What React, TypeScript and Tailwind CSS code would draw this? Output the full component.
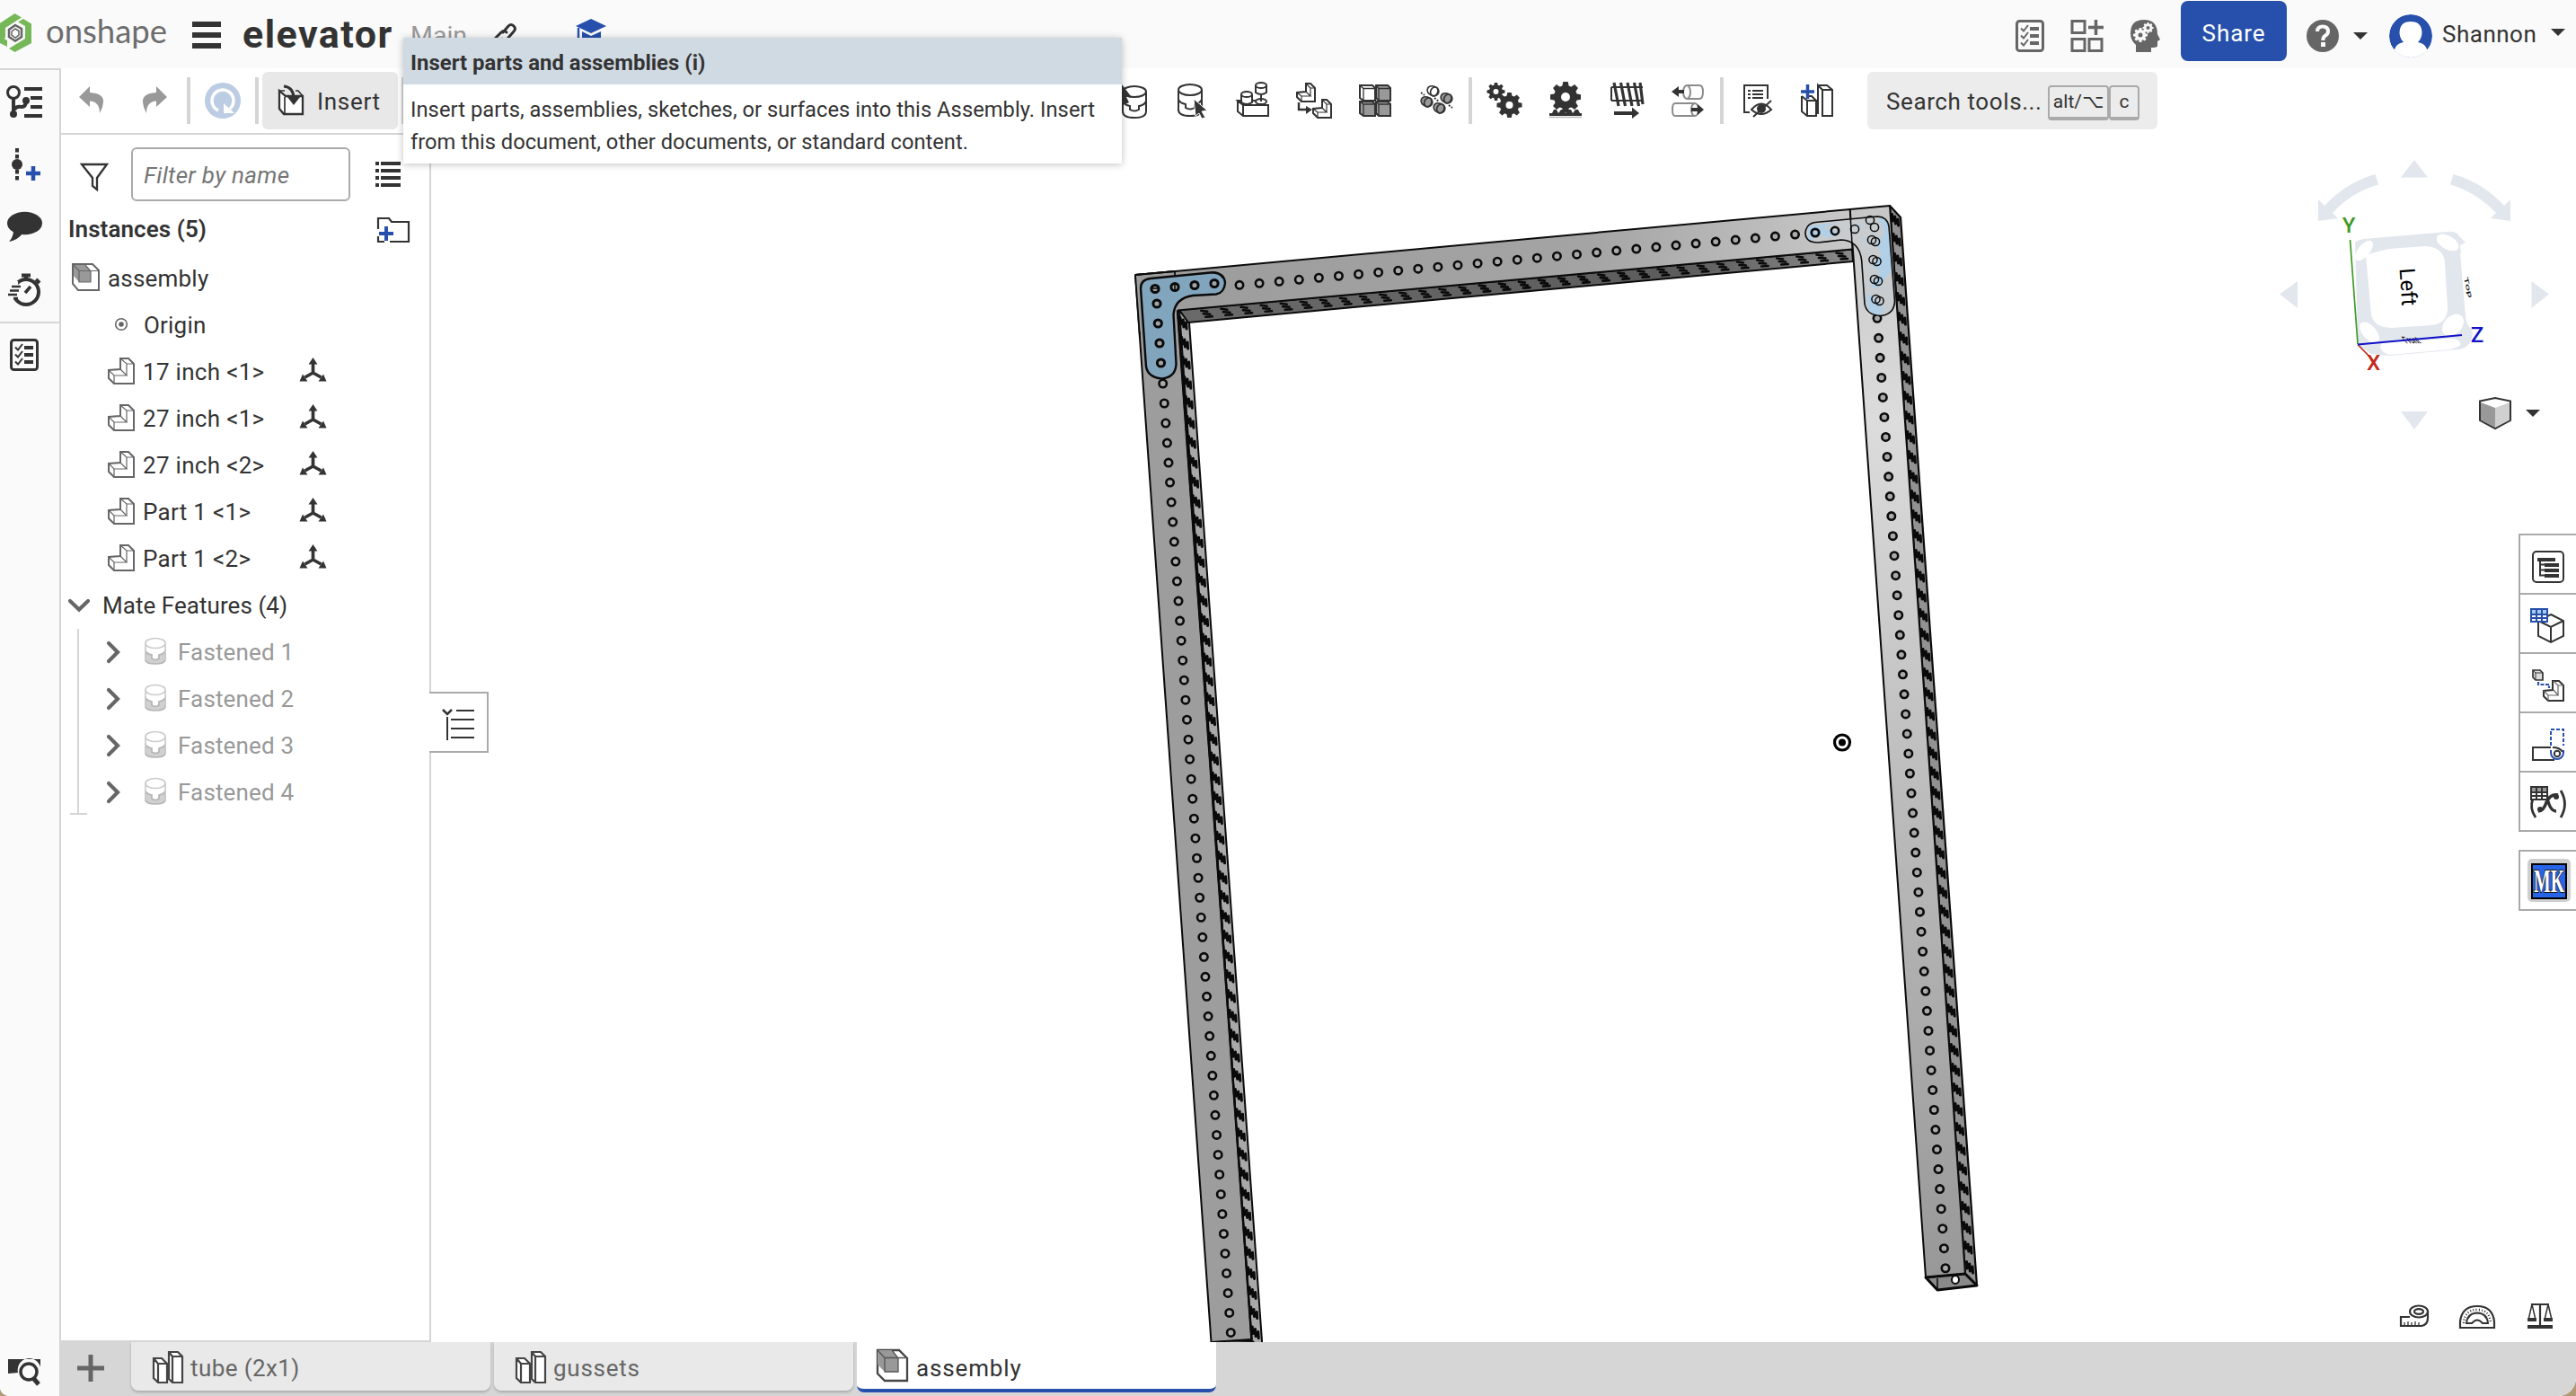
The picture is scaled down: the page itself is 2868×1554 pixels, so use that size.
import type { ReactNode } from "react";

const DARK = "#333333";
const GRAY = "#666666";
const BLUE = "#2650ab";

/* Drawing surface; the view box is given as "x y width height" in page units. */
function Art({ box, children, className = "" }: { box: string; children: ReactNode; className?: string }) {
  const [, , w, h] = box.split(" ");
  return (
    <svg viewBox={box} width={w} height={h} fill="none" className={`shrink-0 ${className}`}>
      {children}
    </svg>
  );
}

const range = (n: number) => Array.from({ length: n }, (_, i) => i);

/* ---------- header ---------- */

function Checklist({ x, y, color }: { x: number; y: number; color: string }) {
  return (
    <g transform={`translate(${x} ${y})`}>
      <rect x="1.5" y="1.5" width="29" height="33" rx="3" stroke={color} strokeWidth="3" />
      {[8, 16, 24].map((t) => (
        <g key={t}>
          <path d={`M6 ${t + 1.5} l3 3 l5 -6.5`} stroke={color} strokeWidth="2" />
          <rect x="16" y={t} width="10" height="4" fill={color} />
        </g>
      ))}
    </g>
  );
}

function Gear({ cx, cy, r, hole, teeth, color, holeColor = "#fff" }: { cx: number; cy: number; r: number; hole: number; teeth: number; color: string; holeColor?: string }) {
  return (
    <g transform={`translate(${cx} ${cy})`}>
      <circle r={r * 0.76} fill={color} />
      {range(teeth).map((i) => (
        <path key={i} transform={`rotate(${(i * 360) / teeth})`} d={`M${-r * 0.24} ${-r * 0.6} L${-r * 0.16} ${-r} H${r * 0.16} L${r * 0.24} ${-r * 0.6} Z`} fill={color} />
      ))}
      <circle r={hole} fill={holeColor} />
    </g>
  );
}

function Header() {
  return (
    <header className="flex h-[76px] shrink-0 items-center bg-[#fafafa] text-[26px] text-[#333]">
      <Art box="0 0 51 76">
        <path d="M16.500 15 L24 19.500 L6 31 V42 L-2 46 V27 Z" fill="#76b857" />
        <path d="M26 21 L35 26.500 V48 L16.500 58 L10 54 L28 43 V29 L20 24.500 Z" fill="#76b857" />
        <path d="M0 40 L8 45 V52 L0 48 Z" fill="#76b857" />
        <path d="M17 28 L24 32 V41 L17 45.500 L10 41 V33 Z" stroke={GRAY} strokeWidth="2.500" />
        <path d="M17 32 L21 34.500 V39 L17 42 L13 39 V35 Z" stroke={GRAY} strokeWidth="1.500" />
      </Art>
      <span className="w-[163px] pb-[8px] font-[Lato] text-[36.500px] leading-[40px] text-[#6d6d6d]">onshape</span>
      <Art box="214 0 56 76">
        <path d="M214 27 H246 M214 39 H246 M214 51 H246" stroke={DARK} strokeWidth="6" />
      </Art>
      <span className="w-[187px] text-[43px] font-bold tracking-[1.450px]">elevator</span>
      <span className="w-[91px] pt-[4px] text-[28.500px] text-[#999]">Main</span>
      <Art box="548 0 93 76">
        <g stroke={DARK} strokeWidth="3" strokeLinecap="round">
          <path d="M560 36 L566 29 q3 -3 6 0 q3 3 0 6 L565 43 q-3 3 -6 0" />
          <path d="M564 36 q-3 -3 -6 0 L551 43 q-3 3 0 6" />
        </g>
      </Art>
      <Art box="641 0 60 76">
        <path d="M641 29 L658 21 L675 29 L658 37 Z M648 35 L658 40 L669 35 V46 H648 Z" fill={BLUE} />
        <path d="M644 31 V46" stroke={BLUE} strokeWidth="2.500" />
      </Art>
      <div className="flex-1" />
      <Art box="2244 0 61 76">
        <Checklist x={2244} y={22} color={GRAY} />
      </Art>
      <Art box="2305 0 67 76">
        <g stroke={GRAY} strokeWidth="3">
          <rect x="2307" y="23.500" width="14" height="13" />
          <rect x="2307" y="43.500" width="14" height="13" />
          <rect x="2326" y="43.500" width="14" height="13" />
          <path d="M2325 30.500 H2342 M2333.500 22 V39" strokeWidth="3.500" />
        </g>
      </Art>
      <Art box="2372 0 56 76">
        <path d="M2387 22 Q2402 22 2402 38 L2405 44 L2402 46 V51 Q2402 53 2395 53 V58 H2378 V50 Q2372 45 2372 37 Q2372 22 2387 22 Z" fill={GRAY} />
        <Gear cx={2383} cy={39} r={8} hole={2.5} teeth={8} color="#fafafa" holeColor={GRAY} />
        <Gear cx={2391.5} cy={31} r={6} hole={2} teeth={8} color="#fafafa" holeColor={GRAY} />
      </Art>
      <button className="mb-[7px] flex h-[67px] w-[118px] items-center justify-center rounded-[8px] bg-[#2650ab] pt-[5px] tracking-[0.900px] text-white">Share</button>
      <Art box="2546 0 114 76">
        <circle cx="2586" cy="40" r="18" fill={GRAY} />
        <path d="M2580 35 Q2580 29.500 2586 29.500 Q2592 29.500 2592 35 Q2592 38 2588.500 40 Q2586.300 41.500 2586.300 45" stroke="#fafafa" strokeWidth="4" />
        <rect x="2584" y="47" width="5" height="5" fill="#fafafa" />
        <path d="M2620 36 H2636 L2628 44 Z" fill={DARK} />
      </Art>
      <Art box="2660 0 59 76">
        <clipPath id="avatar"><circle cx="2684" cy="40" r="24" /></clipPath>
        <g clipPath="url(#avatar)">
          <circle cx="2684" cy="40" r="24" fill={BLUE} />
          <path d="M2684 24 Q2696.500 24 2696.500 37 Q2696 43 2692 47 Q2704 49 2703 64 H2665 Q2664 49 2676 47 Q2672 43 2671.500 37 Q2671.500 24 2684 24 Z" fill="#fff" />
        </g>
      </Art>
      <span className="w-[121px] tracking-[0.500px]">Shannon</span>
      <Art box="2840 0 28 76">
        <path d="M2840 32 H2856 L2848 40 Z" fill={DARK} />
      </Art>
    </header>
  );
}

/* ---------- toolbar ---------- */

const Sep = () => <div className="h-[52px] w-[4px] shrink-0 bg-[#d5d5d5]" />;

function MateBody({ x, y }: { x: number; y: number }) {
  return (
    <g transform={`translate(${x} ${y})`} stroke={DARK} strokeWidth="2">
      <path d="M1 7 V29 Q1 36 14 36 Q27 36 27 29 V7" />
      <ellipse cx="14" cy="7" rx="13" ry="6" />
      <path d="M1 18 Q3 22 9 23 V27 Q14 30 19 27 V23 Q25 22 27 18" />
    </g>
  );
}

function Cyl({ x, y, fill }: { x: number; y: number; fill: string }) {
  return (
    <g transform={`translate(${x} ${y}) rotate(25)`} stroke={DARK} strokeWidth="1.700">
      <path d="M-6 0 a6 5 0 0 1 5 -5 h3 a5 5 0 0 1 0 10 h-3 a6 5 0 0 1 -5 -5 Z" fill={fill} />
      <ellipse cx="2" cy="0" rx="4" ry="5" fill={fill} />
    </g>
  );
}

function Toolbar() {
  return (
    <div className="flex h-[72px] shrink-0 items-center bg-white text-[26px] text-[#333]">
      <Art box="68 76 70 72">
        <path d="M88 108 L100 96 V103 Q116 104 115 114 Q114.500 120 111 126 Q111 113 100 112.500 V119 Z" fill="#999" />
      </Art>
      <Art box="138 76 70 72">
        <path d="M186 108 L174 96 V103 Q158 104 159 114 Q159.500 120 163 126 Q163 113 174 112.500 V119 Z" fill="#999" />
      </Art>
      <Sep />
      <Art box="212 76 72 72">
        <circle cx="248" cy="112" r="20" fill="#bccce3" />
        <path d="M243 123 A12 12 0 1 1 256 121" stroke="#fff" strokeWidth="3.500" />
        <path d="M249 115 L261 126 H249 Z" fill="#fff" />
      </Art>
      <Sep />
      <button className="mx-[4px] flex h-[64px] w-[151px] items-center rounded-[6px] bg-[#e8e8e8] tracking-[0.700px]">
        <Art box="292 80 61 64">
          <path d="M311 101 L318 107 H337 V127 H316 L311 121 Z" fill="#fff" stroke={DARK} strokeWidth="2.300" />
          <path d="M311 101 H317 M329 101 H332 L337 107 M317 108 V126" stroke={DARK} strokeWidth="1.700" />
          <path d="M316 96 Q327 97 327 110" stroke={DARK} strokeWidth="3" />
          <path d="M320 108 H334 L327 117 Z" fill={DARK} />
        </Art>
        <span className="pt-[2px]">Insert</span>
      </button>
      <Sep />
      <div className="w-[796px]" />
      <Art box="1247 76 53 72">
        <MateBody x={1249} y={95} />
        <path d="M1249 94 L1259 107 L1254 108 L1257 114 L1253 116 L1249 111 Z" fill={DARK} />
      </Art>
      <Art box="1300 76 60 72">
        <MateBody x={1311} y={93} />
        <path d="M1329 110 L1344 123 L1338 124 L1342 131 L1338 132 L1335 126 L1331 129 Z" fill={DARK} stroke="#fff" strokeWidth="1" />
      </Art>
      <Art box="1360 76 68 72">
        <g stroke={DARK} strokeWidth="2">
          <path d="M1378 112 V124 L1384 129 H1412 V117 H1384 L1378 112 H1384 M1384 117 V129 M1395 112 H1410" fill="#fff" />
          <path d="M1382 105 V114 Q1388 118 1394 114 V105" fill="#fff" />
          <ellipse cx="1388" cy="105" rx="6" ry="3" fill="#fff" />
          <ellipse cx="1404" cy="113" rx="6" ry="3" fill="#fff" />
          <path d="M1398 95 V103 Q1404 107 1410 103 V95 M1404 106 V113" />
          <ellipse cx="1404" cy="95" rx="6" ry="3" fill="#fff" />
        </g>
      </Art>
      <Art box="1428 76 70 72">
        <g stroke={DARK} strokeWidth="2">
          <path d="M1454 93 H1459 L1464 98 V113 H1449 L1444 108 V103 L1454 102 Z" />
          <path d="M1444 103 L1449 107 V113 M1449 107 H1459 L1454 102 M1454 93 L1459 98 V107 M1459 98 H1464" strokeWidth="1.200" />
          <path d="M1472 111 H1477 L1482 116 V131 H1467 L1462 126 V121 L1472 120 Z" />
          <path d="M1462 121 L1467 125 V131 M1467 125 H1477 L1472 120 M1472 111 L1477 116 V125 M1477 116 H1482" strokeWidth="1.200" />
          <path d="M1446 114 V122 H1456" strokeWidth="2.400" />
          <path d="M1454 118 L1461 122 L1454 127 Z" fill={DARK} stroke="none" />
        </g>
      </Art>
      <Art box="1498 76 67 72">
        <g stroke={DARK} strokeWidth="2">
          <path d="M1514 95 H1528 L1531 98 V112 H1518 L1514 109 Z" fill="#fff" />
          <path d="M1532 95 H1545 L1548 98 V112 H1535 L1532 109 Z M1514 113 H1528 L1531 116 V129 H1518 L1514 126 Z M1532 113 H1545 L1548 116 V129 H1535 L1532 126 Z" fill="#999" />
          <path d="M1514 95 L1518 98.500 H1531 M1518 98.500 V112 M1532 95 L1535 98.500 H1548 M1535 98.500 V112 M1514 113 L1518 116 H1531 M1518 116 V129 M1532 113 L1535 116 H1548 M1535 116 V129" strokeWidth="1.300" />
        </g>
      </Art>
      <Art box="1565 76 70 72">
        <Cyl x={1595} y={101} fill="#fff" />
        <Cyl x={1588} y={113} fill="#999" />
        <Cyl x={1610} y={109} fill="#999" />
        <Cyl x={1602} y={120} fill="#999" />
        <path d="M1582 103 l4 3 M1597 109 l5 4 M1613 117 l4 3" stroke={DARK} strokeWidth="2" strokeDasharray="2 1.500" />
      </Art>
      <Sep />
      <Art box="1639 76 70 72">
        <Gear cx={1665.5} cy={102} r={10} hole={3} teeth={8} color={DARK} />
        <Gear cx={1680.5} cy={117} r={14} hole={4} teeth={8} color={DARK} />
      </Art>
      <Art box="1709 76 68 72">
        <Gear cx={1743} cy={108} r={17} hole={5} teeth={8} color={DARK} />
        <path d="M1725 129 V126 H1728 L1730 122 H1733 L1735 126 L1738 122 H1741 L1743 126 L1746 122 H1749 L1751 126 L1754 122 H1757 L1759 126 H1761 V129 Z" fill={DARK} />
        <path d="M1725 130.500 H1761" stroke="#bbb" strokeWidth="1.500" />
      </Art>
      <Art box="1777 76 68 72">
        <g stroke={DARK}>
          <path d="M1794 97 H1829 M1794 112 H1829 M1794 97 V112" strokeWidth="2" />
          <path d="M1797 92 L1802 118 M1804.500 92 L1809.500 118 M1812 92 L1817 118 M1819.500 92 L1824.500 118 M1826 92 L1829 116" strokeWidth="3.200" />
          <path d="M1797 126 H1819" strokeWidth="4" />
          <path d="M1817 119.500 L1825 126 L1817 132 Z" fill={DARK} stroke="none" />
        </g>
      </Art>
      <Art box="1845 76 70 72">
        <g stroke="#8c8c8c" strokeWidth="2">
          <path d="M1878 95 H1892 Q1896 95 1896 102 Q1896 110 1892 110 H1878" />
          <ellipse cx="1878" cy="102.500" rx="4" ry="7.500" />
          <path d="M1887 115 H1865 Q1862 115 1862 122 Q1862 129 1865 129 H1887" />
          <ellipse cx="1887" cy="122" rx="4" ry="7" />
        </g>
        <path d="M1861 102 L1869 96 V100 H1875 V104 H1869 V108 Z M1897 122 L1890 116 V120 H1883 V124 H1890 V128 Z" fill={DARK} />
      </Art>
      <Sep />
      <Art box="1919 76 70 72">
        <g stroke={DARK} strokeWidth="2">
          <path d="M1948 125 H1942 V95 H1968 V110" />
          <path d="M1946 101 H1949 M1951 101 H1963 M1946 105 H1949 M1951 105 H1963 M1946 109 H1949 M1951 109 H1963" />
          <path d="M1950 122 Q1961 109 1972 122 Q1961 132 1950 122 Z M1952 130 L1972 112" />
          <circle cx="1961" cy="121" r="4" fill={DARK} />
        </g>
      </Art>
      <Art box="1989 76 90 72">
        <g stroke={DARK} strokeWidth="2">
          <path d="M2006 107 V124 L2012 129 H2022 V112 H2012 V129 M2013 107 H2017 L2022 112 M2006 107 L2012 112" />
          <path d="M2024 95 H2034 L2040 100 V129 H2029 V100 L2024 95 V127 M2029 100 H2040" />
        </g>
        <path d="M2005 102 H2020 M2012.500 94 V110" stroke={BLUE} strokeWidth="3.500" />
      </Art>
      <div className="flex h-[64px] w-[323px] items-center rounded-[6px] bg-[#ececec] pl-[21px]">
        <span className="w-[180px] whitespace-nowrap pt-[2px] tracking-[0.600px]">Search tools...</span>
        <kbd className="mt-[5px] flex h-[39px] w-[68px] items-center justify-center rounded-[4px] border-2 border-b-4 border-[#aaa] pt-px font-[Roboto,'DejaVu_Sans'] text-[21px]">alt/⌥</kbd>
        <kbd className="mt-[5px] flex h-[39px] w-[34px] items-center justify-center rounded-[4px] border-2 border-b-4 border-[#aaa] pt-px font-[Roboto] text-[21px]">c</kbd>
      </div>
    </div>
  );
}

function Tooltip() {
  return (
    <div className="absolute left-[449px] top-[42px] z-20 w-[800px] bg-white text-[#333] shadow-[0_1px_8px_rgba(0,0,0,0.25)]">
      <div className="flex h-[52px] items-center bg-[#d0dae3] pl-[8px] pt-[5px] text-[23.900px] font-bold tracking-[0.030px]">Insert parts and assemblies (i)</div>
      <p className="h-[88px] whitespace-nowrap pl-[8px] pt-[10px] text-[23.700px] leading-[36px]">
        <span className="tracking-[0.050px]">Insert parts, assemblies, sketches, or surfaces into this Assembly. Insert</span>
        <br />
        <span>from this document, other documents, or standard content.</span>
      </p>
    </div>
  );
}

/* ---------- left rail and tree ---------- */

function Rail() {
  return (
    <nav className="flex w-[68px] shrink-0 flex-col border-r-2 border-t-2 border-[#d5d5d5] bg-[#fafafa]">
      <Art box="0 78 66 70">
        <g stroke={DARK}>
          <circle cx="15" cy="103" r="6.500" strokeWidth="3" />
          <path d="M15 109 V126 M16 122 Q18 118 24 119 Q29 119 29 112" strokeWidth="4" />
          <path d="M27 99 H47 M34 109 H47 M34 119 H47 M27 129 H47" strokeWidth="4" />
        </g>
        <circle cx="15" cy="127" r="4" fill={DARK} />
        <circle cx="29" cy="112" r="4" fill={DARK} />
      </Art>
      <Art box="0 148 66 70">
        <path d="M19 165 V178 M19 189 V201" stroke={DARK} strokeWidth="4" strokeDasharray="4.500 2.500" />
        <circle cx="19" cy="183" r="6" fill={DARK} />
        <path d="M29 193 H45 M37 185 V201" stroke={BLUE} strokeWidth="4.500" />
      </Art>
      <Art box="0 218 66 70">
        <ellipse cx="27.500" cy="248.500" rx="19.500" ry="12.800" fill={DARK} />
        <path d="M15 256 Q15 264 10 269 Q20 267 25 260 Z" fill={DARK} />
      </Art>
      <Art box="0 288 66 70">
        <circle cx="29" cy="325" r="14" stroke={DARK} strokeWidth="4" />
        <path d="M8 313 H20 V332 H8 Z" fill="#fafafa" />
        <path d="M13 319 H23 M11 323.500 H21 M9 328 H19 M15 332 H20" stroke={DARK} strokeWidth="2.300" />
        <path d="M24 306.500 H34 M29 306 V311 M40 311 L44 315" stroke={DARK} strokeWidth="4" />
        <path d="M28 326 L34 319" stroke={DARK} strokeWidth="3.500" />
      </Art>
      <div className="h-[2px] bg-[#d5d5d5]" />
      <Art box="0 360 66 70">
        <Checklist x={11} y={377} color={DARK} />
      </Art>
      <div className="flex-1" />
      <Art box="0 1500 66 54">
        <path d="M9 1529 V1513 H45 V1522 A12 12 0 0 0 20 1528 Z" fill={DARK} />
        <circle cx="32" cy="1527" r="9" stroke={DARK} strokeWidth="3.500" />
        <path d="M37 1534 L43 1541" stroke={DARK} strokeWidth="5" />
      </Art>
    </nav>
  );
}

function PartGlyph() {
  return (
    <g stroke={GRAY} strokeWidth="2">
      <path d="M134 399 H143 L149 405 V427 H127 L121 421 V412 L134 411 Z" fill="#fff" />
      <path d="M121 412 L127 418 H141 L134 411 M127 418 V427 M134 399 L141 405 H149 M141 405 V418" strokeWidth="1.200" />
    </g>
  );
}

function TriAxis() {
  return (
    <g stroke={DARK} strokeWidth="3.700" fill={DARK}>
      <path d="M348.500 415 V404 M348.500 415 L339.500 420 M348.500 415 L357.500 420" />
      <path d="M348.500 398 L353.500 405.500 H343.500 Z M333.500 424.500 L337 416.500 L342.500 424.500 Z M363.500 424.500 L360 416.500 L354.500 424.500 Z" strokeWidth="0" />
    </g>
  );
}

function AssemblyGlyph() {
  return (
    <>
      <path d="M81 294 H103 L110 301 V323 H87 L81 316 Z" fill="#fff" stroke={GRAY} strokeWidth="2" />
      <path d="M82 295 H95 L101 302 V314 H88 L82 307 Z" fill="#999" />
      <path d="M81 294 L88 301.500 H110 M88 301.500 V314 H101 V302 L95 295" stroke={GRAY} strokeWidth="1.200" />
    </>
  );
}

function FastenedGlyph() {
  return (
    <g stroke="#b5b5b5" strokeWidth="1.700">
      <path d="M162 725 Q164 728 169 729 V733 Q173 736 177 733 V729 Q182 728 184 725 V735 Q183 739 173 739 Q163 739 162 735 Z" fill="#d0d0d0" />
      <path d="M162 716 V735 M184 716 V735" stroke="#ccc" />
      <ellipse cx="173" cy="716" rx="11" ry="5.500" stroke="#ccc" />
    </g>
  );
}

function TreePanel() {
  return (
    <aside className="relative flex w-[412px] shrink-0 flex-col border-b-2 border-r-2 border-t-2 border-[#d5d5d5] bg-white text-[26px] text-[#333]">
      <div className="flex h-[78px] items-center pt-[10px]">
        <Art box="68 155 78 78">
          <path d="M91 183 H119 L108 198 V211 L103 207 V198 Z" stroke={DARK} strokeWidth="2.300" />
        </Art>
        <div className="flex h-[60px] w-[244px] items-center rounded-[6px] border-2 border-[#aaa] pl-[12px] pt-[2px] italic tracking-[0.300px] text-[#757575]">Filter by name</div>
        <Art box="390 155 86 78">
          <path d="M418 182 H422 M424 182 H446 M418 190 H422 M424 190 H446 M418 198 H422 M424 198 H446 M418 206 H422 M424 206 H446" stroke={DARK} strokeWidth="3.800" />
        </Art>
      </div>
      <div className="flex h-[56px] items-center">
        <span className="w-[343px] pb-px pl-[8px] font-semibold tracking-[0.080px]">Instances (5)</span>
        <Art box="411 228 60 56">
          <path d="M421 255 V243 H433 L436 247 H455 V269 H434 M421 263 V269 H428" stroke={DARK} strokeWidth="2.200" />
          <path d="M422 260 H438 M430 252 V268" stroke={BLUE} strokeWidth="4" />
        </Art>
      </div>
      <div className="flex h-[52px] items-center tracking-[0.200px]">
        <Art box="68 284 52 52"><AssemblyGlyph /></Art>
        assembly
      </div>
      <div className="flex h-[52px] items-center tracking-[0.200px]">
        <Art box="68 336 92 52">
          <circle cx="135" cy="361" r="6.300" stroke={GRAY} strokeWidth="1.600" />
          <circle cx="135" cy="361" r="2.800" fill={GRAY} />
        </Art>
        Origin
      </div>
      {["17 inch <1>", "27 inch <1>", "27 inch <2>", "Part 1 <1>", "Part 1 <2>"].map((name) => (
        <div key={name} className="flex h-[52px] items-center">
          <Art box="68 388 91 52"><PartGlyph /></Art>
          <span className="w-[167px] tracking-[0.300px]">{name}</span>
          <Art box="326 388 44 52"><TriAxis /></Art>
        </div>
      ))}
      <div className="flex h-[52px] items-center tracking-[0.050px]">
        <Art box="68 648 46 52">
          <path d="M78 669 L88 678.500 L98 669" stroke={GRAY} strokeWidth="4.200" strokeLinecap="round" />
        </Art>
        Mate Features (4)
      </div>
      <div className="relative tracking-[0.150px] text-[#999]">
        {[1, 2, 3, 4].map((n) => (
          <div key={n} className="flex h-[52px] items-center">
            <Art box="68 700 130 52">
              <path d="M121 716 L131 726 L121 736" stroke={GRAY} strokeWidth="4.200" strokeLinecap="round" />
              <FastenedGlyph />
            </Art>
            {`Fastened ${n}`}
          </div>
        ))}
        <div className="absolute left-[18px] top-0 h-[206px] w-[2px] bg-[#d5d5d5]" />
        <div className="absolute left-[10px] top-[205px] h-[2px] w-[19px] bg-[#d5d5d5]" />
      </div>
    </aside>
  );
}

/* ---------- model view ---------- */

const INK = "#0a0a0a";

function Holes({ x, y, dx, dy, n }: { x: number; y: number; dx: number; dy: number; n: number }) {
  return (
    <g stroke={INK} strokeWidth="2.600" fill="#aaaaaa">
      {range(n).map((i) => <circle key={i} cx={x + dx * i} cy={y + dy * i} r="4.200" />)}
    </g>
  );
}

function SideSlots({ x, y, dx, dy, n }: { x: number; y: number; dx: number; dy: number; n: number }) {
  return (
    <g stroke={INK} strokeWidth="3.100" strokeLinecap="round">
      {range(n).map((i) => (
        <path key={i} transform={`translate(${x + dx * i} ${y + dy * i})`} d="M-3.500 -6.500 L-2.800 1 M-0.300 -4 L0.400 4 M3 -1 L3.500 6" />
      ))}
    </g>
  );
}

function UnderSlots({ x, y, dx, dy, n }: { x: number; y: number; dx: number; dy: number; n: number }) {
  return (
    <g stroke={INK} strokeWidth="2.600" strokeLinecap="round">
      {range(n).map((i) => (
        <path key={i} transform={`translate(${x + dx * i} ${y + dy * i})`} d="M-6 -3.500 L1 -2.500 M-3.500 0 L4 0.500 M-1 3.500 L6.500 3" />
      ))}
    </g>
  );
}

function Model() {
  return (
    <svg viewBox="480 148 2388 1346" width="2388" height="1346" fill="none" className="absolute left-0 top-0" strokeLinejoin="round">
      <defs>
        <linearGradient id="barFace" x1="1264" x2="2104" y1="0" y2="0" gradientUnits="userSpaceOnUse">
          <stop offset="0" stopColor="#9c9c9c" />
          <stop offset="0.600" stopColor="#a4a4a4" />
          <stop offset="1" stopColor="#cdcdcd" />
        </linearGradient>
        <linearGradient id="rightFace" x1="0" x2="0" y1="229" y2="1422" gradientUnits="userSpaceOnUse">
          <stop offset="0" stopColor="#c6c6c6" />
          <stop offset="0.200" stopColor="#dcdcdc" />
          <stop offset="0.550" stopColor="#bcbcbc" />
          <stop offset="1" stopColor="#989898" />
        </linearGradient>
        <linearGradient id="under" x1="1313" x2="2062" y1="0" y2="0" gradientUnits="userSpaceOnUse">
          <stop offset="0" stopColor="#6a6a6a" />
          <stop offset="0.750" stopColor="#5c5c5c" />
          <stop offset="1" stopColor="#8a8a8a" />
        </linearGradient>
        <clipPath id="plate"><path d="M2021 247.500 L2090 241 Q2101 241 2103 252 L2109.500 335 Q2109 350 2094 351.500 Q2078 351 2076 338 L2072.700 290 Q2070 268 2050 267 L2024 270 Q2010 270 2010 259 Q2011 249 2021 247.500 Z" /></clipPath>
      </defs>

      {/* left upright */}
      <path d="M1313 345 L1324 359 L1405.500 1500 L1393.500 1500 Z" fill="#a9a9a9" stroke={INK} strokeWidth="2" />
      <path d="M1264 306 L1308 302 L1393.500 1491 L1348.500 1494 Z" fill="#9d9d9d" stroke={INK} strokeWidth="2" />
      <path d="M1348.500 1493.500 L1393.500 1490.500 L1397 1494 Z" fill={INK} />
      <path d="M1311 345 L1393.500 1491" stroke={INK} strokeWidth="2.500" />
      <SideSlots x={1317.500} y={360} dx={1.573} dy={22.030} n={52} />
      <Holes x={1294.700} y={427} dx={1.575} dy={22.010} n={49} />

      {/* cross bar */}
      <path d="M1313 345 L2062 277.500 L2063 291 L1323 359 Z" fill="url(#under)" stroke={INK} strokeWidth="2" />
      <UnderSlots x={1343.300} y={349.300} dx={22.100} dy={-2.010} n={33} />
      <path d="M1264 306 L2060 233 L2062 277.500 L1311 345.500 Z" fill="url(#barFace)" />
      <path d="M1264 306 L2060 233 M2062 277.500 L1311 345.500" stroke={INK} strokeWidth="2" />
      <path d="M1264 306 L1268 370 L1311 345 Z" fill="#9d9d9d" />
      <path d="M1264 306 L1269 375 M1264 306 L1308 302 V308" stroke={INK} strokeWidth="1.800" />
      <Holes x={1380} y={317.300} dx={22.090} dy={-2.010} n={29} />

      {/* left gusset */}
      <path d="M1270 321 Q1270 311 1281 310 L1350 303.300 Q1363 304 1364 315 Q1363 326 1354 327.500 L1328 329 Q1308 332 1306.500 350 L1309.500 405 Q1309 420 1293.500 421.500 Q1278 420 1276 408 Z" fill="#82a5be" stroke={INK} strokeWidth="2.400" />
      <g stroke={INK} strokeWidth="3" fill="#a0a4a8">
        {[[1286, 321.500], [1308, 319.500], [1330, 317.500], [1352, 315.500], [1288, 338], [1289.300, 360], [1291, 382], [1292.500, 404]].map(([x, y]) => (
          <circle key={`${x}-${y}`} cx={x} cy={y} r="4.100" />
        ))}
        <path d="M1281 321 H1291 M1308 315 V324" strokeWidth="1.600" />
      </g>

      {/* right upright */}
      <path d="M2104 229 L2116 242 L2201 1431 L2188 1418 Z" fill="#929292" stroke={INK} strokeWidth="2.200" />
      <path d="M2059.700 233 L2104 229 L2188 1418 L2144 1422 Z" fill="url(#rightFace)" stroke={INK} strokeWidth="2" />
      <SideSlots x={2110} y={245} dx={1.566} dy={22} n={54} />
      <Holes x={2090} y={354.300} dx={1.583} dy={22.030} n={49} />
      <path d="M2144 1422 L2188 1418 L2201 1431 L2157 1436 Z" fill="#8a8a8a" stroke={INK} strokeWidth="3" />
      <path d="M2157 1423 V1434" stroke={INK} strokeWidth="1.500" />
      <ellipse cx="2177" cy="1424.500" rx="4" ry="4.500" fill="#fff" stroke={INK} strokeWidth="2" />

      {/* right gusset */}
      <g clipPath="url(#plate)">
        <rect x="2005" y="235" width="110" height="120" fill="#c9cccf" />
        <path d="M2012 252 L2042 248 L2030 254 L2048 258 L2040 264 L2026 262 L2014 268 Z M2092 243 L2102 242 L2108 300 L2100 308 L2090 322 L2082 318 L2094 302 L2084 296 L2095 282 L2089 272 L2098 258 Z M2075 262 L2082 270 L2078 271 Z M2078 326 L2088 334 L2098 344 L2092 352 L2080 348 Z M2062 252 L2074 249 L2069 254 Z" fill="#b1cfe6" />
      </g>
      <path d="M2021 247.500 L2090 241 Q2101 241 2103 252 L2109.500 335 Q2109 350 2094 351.500 Q2078 351 2076 338 L2072.700 290 Q2070 268 2050 267 L2024 270 Q2010 270 2010 259 Q2011 249 2021 247.500 Z" stroke={INK} strokeWidth="1.600" />
      <path d="M2059.700 233 L2062.500 280" stroke={INK} strokeWidth="1.500" />
      <g stroke={INK} strokeWidth="1.500">
        {[[2082, 245], [2087, 253], [2065, 255], [2084, 267], [2088, 269], [2085.500, 289], [2089.500, 291], [2087, 311], [2091, 313], [2088.500, 333], [2092.500, 335]].map(([x, y]) => (
          <circle key={`${x}-${y}`} cx={x} cy={y} r="4.600" />
        ))}
        <circle cx="2021" cy="259" r="4.200" strokeWidth="2.800" />
        <circle cx="2043" cy="257" r="4.200" strokeWidth="2.500" />
      </g>

      {/* origin marker */}
      <circle cx="2051" cy="826.500" r="8.500" fill="#fff" stroke="#000" strokeWidth="3.200" />
      <circle cx="2051" cy="826.500" r="4" fill="#000" />
    </svg>
  );
}

function ViewCube() {
  return (
    <svg viewBox="2528 168 330 320" width="330" height="320" fill="none" className="absolute left-[2048px] top-[20px] font-[Roboto]">
      <g fill="#e2e7ed">
        <path d="M2688 178 L2703 197.500 H2673 Z M2538 327.500 L2558 313 V343 Z M2838 327.500 L2818.500 313 V343 Z M2688 478 L2673 458 H2703 Z" />
        <path d="M2644.500 194 L2648 205.500 Q2618 214 2597 237 L2603 243 L2581 246 V222 L2588 229 Q2612 203 2644.500 194 Z" />
        <path d="M2731.500 194 L2728 205.500 Q2757 214 2779 237 L2773 243 L2795 246 V222 L2788 229 Q2764 203 2731.500 194 Z" />
        <path d="M2622 270 Q2624 267 2632 266 L2725 258 Q2735 257 2738 263 L2745 270 L2739 273 L2749 362 L2753 370 Q2752 386 2738 389 L2660 396 L2640 394 L2625 384 Z" />
      </g>
      <path d="M2634 284 Q2650 279 2660 277 L2700 274 Q2721 275 2722 293 L2725 342 Q2725 361 2706 362 L2662 365 Q2642 364 2640 350 Z" fill="#fff" />
      <g fill="#fff">
        <ellipse cx="2632" cy="279" rx="13.500" ry="6.500" transform="rotate(-50 2632 279)" />
        <ellipse cx="2725" cy="270" rx="13.500" ry="7.500" transform="rotate(30 2725 270)" />
        <ellipse cx="2638" cy="370" rx="14" ry="7.500" transform="rotate(48 2638 370)" />
        <ellipse cx="2731" cy="362" rx="14" ry="10" transform="rotate(-48 2731 362)" />
        <path d="M2739 282 L2750 284 L2752 350 L2754 368 Q2746 364 2745 352 Z M2652 381 L2730 377 Q2741 378 2739 385 L2728 389 L2660 395 Q2646 390 2652 381 Z" />
      </g>
      <text transform="translate(2671.500 299) rotate(86)" fontSize="24" fill="#000">Left</text>
      <text transform="translate(2679 382) skewX(40)" fontSize="10" textLength="17" lengthAdjust="spacingAndGlyphs" fill="#111" stroke="#111" strokeWidth="0.300">Front</text>
      <text transform="translate(2743 309) rotate(76) scale(1 0.450)" fontSize="14" fill="#111" stroke="#111" strokeWidth="0.300">Top</text>
      <path d="M2616.500 267 L2625 383" stroke="#3f9a25" strokeWidth="1.700" />
      <path d="M2625 383.500 L2642 401" stroke="#c4281b" strokeWidth="1.700" />
      <path d="M2625 383.500 L2741 373" stroke="#1212c8" strokeWidth="2" />
      <g fontSize="24" fontWeight="500" textAnchor="middle">
        <text x="2615" y="259" fill="#3f9a25">Y</text>
        <text x="2758" y="380.500" fill="#1212c8">Z</text>
        <text x="2642.500" y="412" fill="#c4281b">X</text>
      </g>
      <path d="M2761 446.500 L2778 443 L2795 446.500 V468 L2778 477 L2761 468 Z" fill="#fff" stroke={DARK} strokeWidth="2" />
      <path d="M2762 448 L2778 454 V476 L2762 467.500 Z" fill="#999" />
      <path d="M2794 448 L2778 454 V476 L2794 467.500 Z" fill="#d0d0d0" />
      <path d="M2812 456 H2828 L2820 464 Z" fill={DARK} />
    </svg>
  );
}

function Grid({ x, y, color, head }: { x: number; y: number; color: string; head: string }) {
  return (
    <g transform={`translate(${x} ${y})`}>
      <rect width="20" height="16" fill={color} />
      {[2, 8, 14].map((c) => (
        <g key={c}>
          <rect x={c} y="2" width="4" height="4" fill={head} />
          <rect x={c} y="8" width="4" height="2" fill="#fff" />
          <rect x={c} y="12" width="4" height="2" fill="#fff" />
        </g>
      ))}
    </g>
  );
}

function SidePanelTabs() {
  const cell = "h-[66px] border-b-2 border-[#aaa] bg-white";
  return (
    <div className="absolute right-0 top-[446px] w-[64px]">
      <div className="border-l-2 border-t-2 border-[#aaa]">
        <div className={cell}>
          <Art box="2806 596 62 64">
            <rect x="2820" y="614" width="34" height="34" rx="4" stroke={DARK} strokeWidth="2" />
            <path d="M2825 623 H2845 M2833 629 H2849 M2833 635 H2849 M2833 641 H2849" stroke={DARK} strokeWidth="4" />
            <path d="M2828 624 V640.500 H2834 M2828 628.500 H2834 M2828 634.500 H2834" stroke={DARK} strokeWidth="2" />
          </Art>
        </div>
        <div className={cell}>
          <Art box="2806 662 62 64">
            <path d="M2840 684 L2854 691 V708 L2840 715 L2826 708 V691 Z M2826 691 L2840 698 L2854 691 M2840 698 V715" stroke={DARK} strokeWidth="2" />
            <Grid x={2817} y={677} color={BLUE} head="#a3cdf0" />
          </Art>
        </div>
        <div className={cell}>
          <Art box="2806 728 62 64">
            <path d="M2820 746 H2828 L2831 749 V757 H2823 L2820 754 Z" fill="#ddd" stroke={DARK} strokeWidth="1.700" />
            <path d="M2820 746 L2823 749 H2831 M2823 749 V757" stroke={DARK} strokeWidth="1" />
            <path d="M2826 759 V762 H2838 V766" stroke={BLUE} strokeWidth="2.200" strokeDasharray="4 1.500" />
            <path d="M2842 758 H2849 L2854 763 V780 H2837 L2832 775 V769 L2842 768 Z" stroke={DARK} strokeWidth="2" />
            <path d="M2832 769 L2837 774 H2848 L2843 768 M2837 774 V780 M2843 758 L2848 763 V774 M2848 763 H2854" stroke={GRAY} strokeWidth="1.200" />
          </Art>
        </div>
        <div className={cell}>
          <Art box="2806 794 62 64">
            <path d="M2840 832 H2820 V846 H2844 M2842 832 Q2850 832 2853 837" stroke={DARK} strokeWidth="2" />
            <path d="M2840 830 V812 H2854 V830" stroke={BLUE} strokeWidth="2" strokeDasharray="4 2" />
            <path d="M2840 835 V838 A7 7 0 0 0 2854 838 V835" stroke={BLUE} strokeWidth="2" />
            <circle cx="2847" cy="839" r="3.200" stroke={DARK} strokeWidth="2" />
          </Art>
        </div>
        <div className={cell}>
          <Art box="2806 860 62 64">
            <path d="M2820 889 Q2816 900 2823 910 M2851 880 Q2860 895 2851 910" stroke={DARK} strokeWidth="2.800" />
            <path d="M2826 903 Q2832 903 2835 893 Q2840 883 2848 885 M2835 883 Q2838 903 2846 903" stroke={DARK} strokeWidth="3.400" />
            <circle cx="2828" cy="901" r="3" fill={DARK} />
            <circle cx="2846" cy="887" r="3" fill={DARK} />
            <Grid x={2817} y={875} color={DARK} head="#999" />
          </Art>
        </div>
      </div>
      <div className="mt-[20px] h-[68px] border-y-2 border-l-2 border-[#aaa] bg-white">
        <Art box="2806 948 62 64" className="font-['Liberation_Serif']">
          <rect x="2814" y="956" width="48" height="48" rx="5" fill="#cfcfcf" />
          <rect x="2819" y="962" width="38" height="38" fill="#2864e8" stroke="#000" strokeWidth="2" />
          <text x="2821" y="993" fontSize="35" fontWeight="700" textLength="34" lengthAdjust="spacingAndGlyphs" fill="#fff" stroke="#1a1a1a" strokeWidth="2" paintOrder="stroke">MK</text>
        </Art>
      </div>
    </div>
  );
}

function MeasureTools() {
  return (
    <div className="absolute bottom-0 right-0 flex">
      <Art box="2660 1440 64 54">
        <g stroke={DARK} strokeWidth="2.200">
          <path d="M2683 1466 H2673 V1476 H2696 Q2703 1475 2703 1467 V1460" />
          <ellipse cx="2693" cy="1460" rx="10" ry="6.500" />
          <ellipse cx="2693" cy="1460" rx="5" ry="2.800" />
          <path d="M2677 1475 V1472 M2681 1475 V1471 M2685 1475 V1472 M2689 1475 V1471 M2693 1475 V1472" strokeWidth="1.300" />
        </g>
      </Art>
      <Art box="2724 1440 76 54">
        <path d="M2739 1478 V1471 Q2741 1454 2758 1454 Q2775 1454 2777 1471 V1478 Z" stroke={DARK} strokeWidth="2.200" />
        <path d="M2746 1473 Q2747 1462 2758 1461.500 Q2769 1462 2770 1473 H2764 Q2758 1466 2752 1473 Z" stroke={DARK} strokeWidth="2" />
        <path d="M2743 1473 Q2744 1458 2758 1458 Q2772 1458 2773 1473" stroke={DARK} strokeWidth="2.500" strokeDasharray="1 2.200" />
      </Art>
      <Art box="2800 1440 68 54">
        <path d="M2818 1452 H2838 M2828 1452 V1476" stroke={DARK} strokeWidth="2.200" />
        <path d="M2819 1452 L2815.500 1467 M2819 1452 L2822.500 1467 M2837 1452 L2833.500 1467 M2837 1452 L2840.500 1467" stroke={DARK} strokeWidth="1.500" />
        <path d="M2814 1467 H2824 V1471 H2814 Z M2832 1467 H2842 V1471 H2832 Z M2814 1475 H2842 V1479 H2814 Z" fill={DARK} />
      </Art>
    </div>
  );
}

/* ---------- document tabs ---------- */

function StudioGlyph({ x }: { x: number }) {
  return (
    <g transform={`translate(${x} 1502)`} stroke="#444" strokeWidth="2.200" fill="#fff">
      <path d="M1 8 H10 L16 14 V35 H6 L1 30 Z M6 14 H16 M6 14 V35 M1 8 L6 14" />
      <path d="M18 1 H28 L33 6 V35 H22 L18 31 Z M22 6 H33 M22 6 V35 M18 1 L22 6" />
    </g>
  );
}

function TabBar() {
  const tab = "mr-[4px] flex h-[54px] w-[400px] items-center rounded-b-[8px] shadow-[0_2px_3px_rgba(0,0,0,0.2)]";
  return (
    <footer className="flex h-[60px] shrink-0 items-start bg-[#d6d6d6] text-[26px] text-[#666]">
      <Art box="68 1494 78 60">
        <path d="M86 1523 H116 M101 1508 V1538" stroke={GRAY} strokeWidth="5" />
      </Art>
      <div className={`${tab} bg-[#e9e9e9]`}>
        <Art box="146 1492 66 54"><StudioGlyph x={170} /></Art>
        <span className="pt-[4px] tracking-[0.400px]">tube (2x1)</span>
      </div>
      <div className={`${tab} bg-[#e9e9e9]`}>
        <Art box="550 1492 66 54"><StudioGlyph x={574} /></Art>
        <span className="pt-[4px] tracking-[0.750px]">gussets</span>
      </div>
      <div className="flex h-[56px] w-[400px] items-center overflow-hidden rounded-b-[8px] border-b-4 border-[#2650ab] bg-white text-[#333]">
        <Art box="954 1493 66 54">
          <path d="M977 1503 H1001 L1010 1512 V1537 H985 L977 1529 Z" fill="#fff" stroke="#444" strokeWidth="2.300" />
          <path d="M977 1503 H993 L1000 1511 V1527 H985 L977 1519 Z" fill="#999" />
          <path d="M977 1503 L985 1511.500 H1010 M985 1511.500 V1527 H1000 V1512 L993 1503" stroke="#555" strokeWidth="1.300" />
        </Art>
        <span className="pt-[6px] tracking-[0.850px]">assembly</span>
      </div>
    </footer>
  );
}

export default function App() {
  return (
    <div className="h-[1554px] w-[2868px] overflow-hidden bg-[#b39a76]">
      <div className="relative flex h-[1554px] w-[2868px] flex-col overflow-hidden rounded-bl-[10px] rounded-br-[20px] bg-white font-[Roboto,sans-serif]">
        <Header />
        <div className="flex min-h-0 flex-1">
          <Rail />
          <div className="flex min-w-0 flex-1 flex-col">
            <Toolbar />
            <div className="flex min-h-0 flex-1">
              <TreePanel />
              <main className="relative min-w-0 flex-1 bg-white">
                <Model />
                <div className="absolute left-[-2px] top-[622px] flex h-[68px] w-[66px] items-center justify-center border-y-2 border-r-2 border-[#aaa] bg-white pt-[3px]">
                  <Art box="490 788 40 38">
                    <path d="M493 791 L498 796 L503 791" stroke={DARK} strokeWidth="2.500" />
                    <path d="M508 792 H528 M502 802 H528 M502 812 H528 M502 822 H528 M498 799 V825" stroke={DARK} strokeWidth="2" />
                  </Art>
                </div>
                <ViewCube />
                <SidePanelTabs />
                <MeasureTools />
              </main>
            </div>
            <TabBar />
          </div>
        </div>
        <Tooltip />
      </div>
    </div>
  );
}
